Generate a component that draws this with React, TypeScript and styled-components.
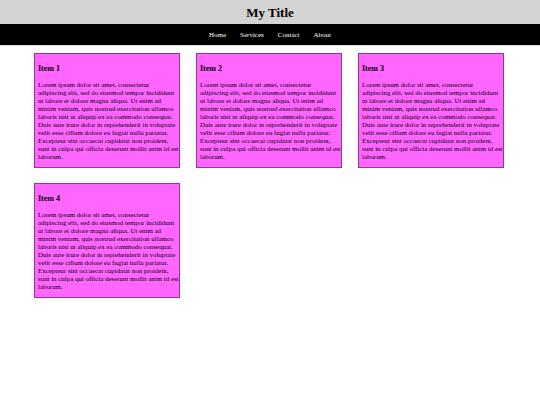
import styled, { createGlobalStyle } from 'styled-components';

const GlobalStyle = createGlobalStyle`
  html, body {
    margin: 0;
    padding: 0;
    background: #ffffff;
    font-family: "Liberation Serif", "Times New Roman", serif;
    color: #000000;
  }
`;

const Header = styled.header`
  height: 24px;
  background: #d3d3d3;
  display: flex;
  align-items: center;
  justify-content: center;
`;

const Title = styled.h1`
  margin: 0;
  font-size: 13px;
  font-weight: bold;
  line-height: 1;
`;

const Nav = styled.nav`
  height: 21px;
  background: #000000;
  display: flex;
  align-items: center;
  justify-content: center;
  gap: 14px;
  box-shadow: 0 1px 1px rgba(0, 0, 0, 0.12);
`;

const NavLink = styled.a`
  color: #ffffff;
  font-size: 7px;
  text-decoration: none;
`;

const Grid = styled.main`
  display: grid;
  grid-template-columns: repeat(3, 146px);
  column-gap: 16px;
  row-gap: 15px;
  padding: 8px 0 0 34px;
`;

const Card = styled.section`
  box-sizing: border-box;
  width: 146px;
  background: #ff66ff;
  border: 1px solid #993399;
  padding: 0 0 0 3px;
`;

const CardTitle = styled.h3`
  margin: 10px 0 8px;
  font-size: 8px;
  font-weight: bold;
  line-height: 9px;
`;

const CardText = styled.p`
  margin: 0 0 6px;
  font-size: 6.9px;
  line-height: 8px;
`;

const lorem =
  'Lorem ipsum dolor sit amet, consectetur adipiscing elit, sed do eiusmod tempor incididunt ut labore et dolore magna aliqua. Ut enim ad minim veniam, quis nostrud exercitation ullamco laboris nisi ut aliquip ex ea commodo consequat. Duis aute irure dolor in reprehenderit in voluptate velit esse cillum dolore eu fugiat nulla pariatur. Excepteur sint occaecat cupidatat non proident, sunt in culpa qui officia deserunt mollit anim id est laborum.';

const items = ['Item 1', 'Item 2', 'Item 3', 'Item 4'];
const links = ['Home', 'Services', 'Contact', 'About'];

function App() {
  return (
    <>
      <GlobalStyle />
      <Header>
        <Title>My Title</Title>
      </Header>
      <Nav>
        {links.map(l => (
          <NavLink key={l} href="#">{l}</NavLink>
        ))}
      </Nav>
      <Grid>
        {items.map(item => (
          <Card key={item}>
            <CardTitle>{item}</CardTitle>
            <CardText>{lorem}</CardText>
          </Card>
        ))}
      </Grid>
    </>
  );
}

export default App;
